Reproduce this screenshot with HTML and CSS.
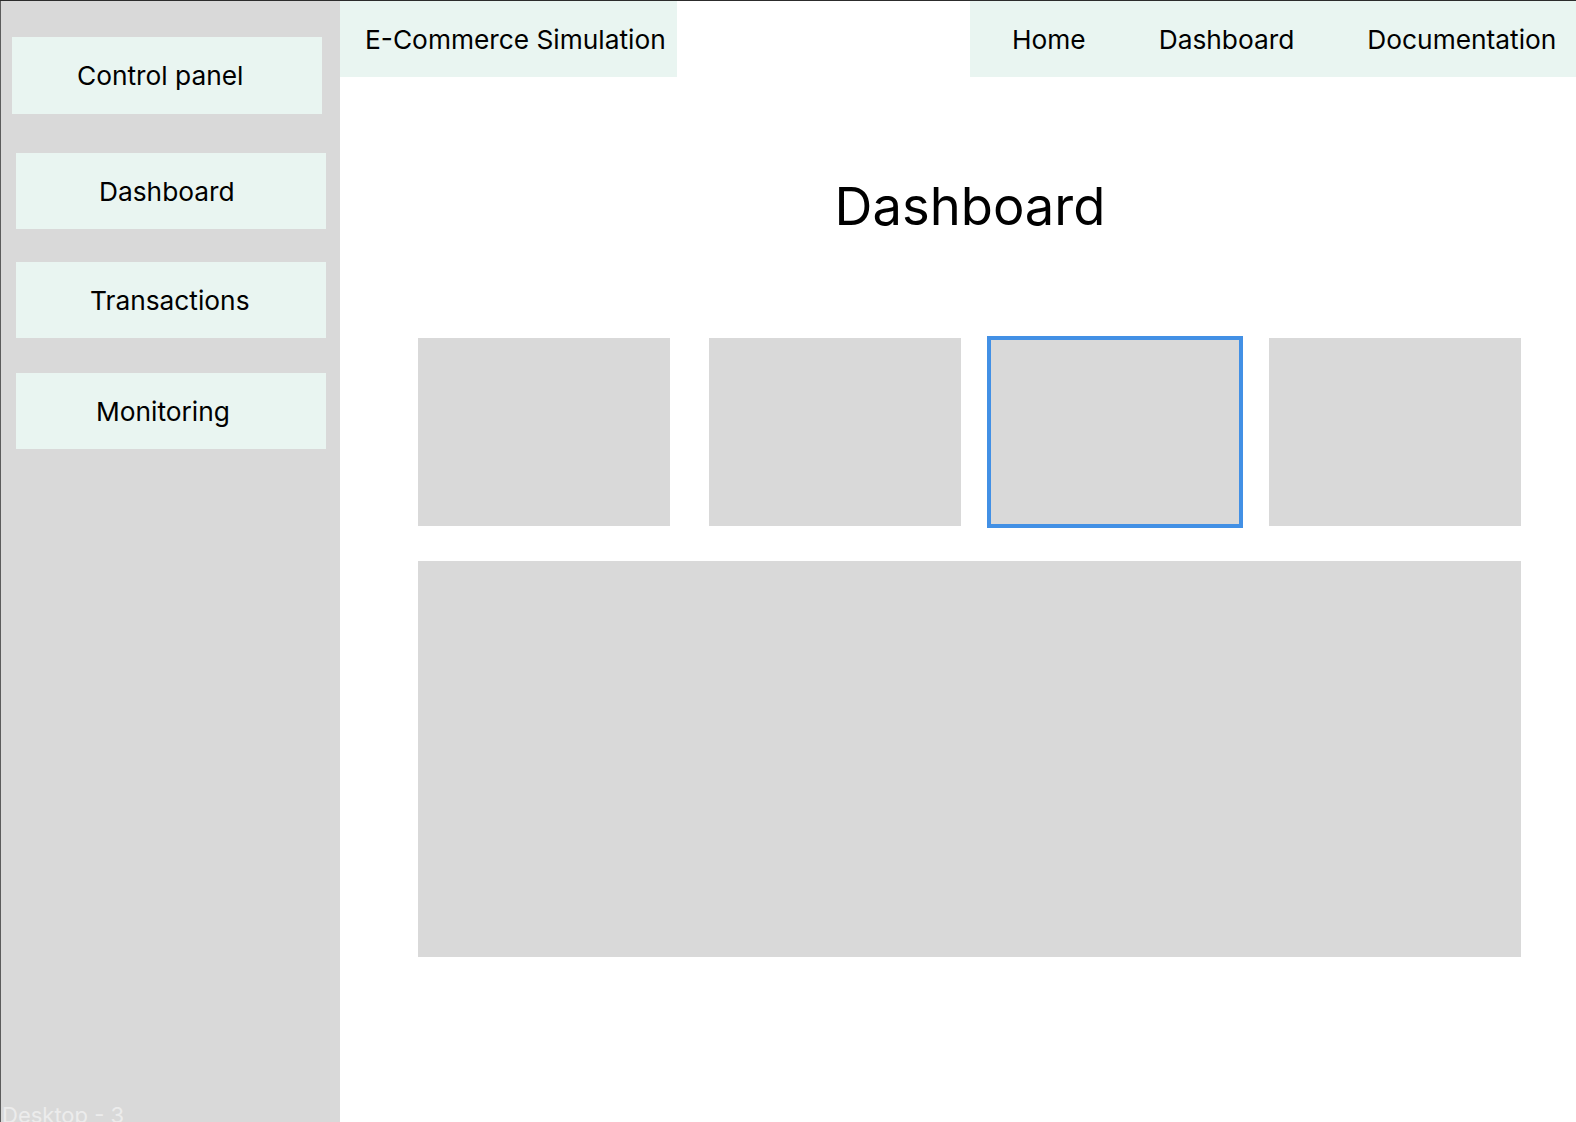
FILE: index.html
```html
<!DOCTYPE html>
<html lang="en">
<head>
<meta charset="utf-8">
<title>Dashboard</title>
<link rel="stylesheet" href="styles.css">
</head>
<body>
<div class="page">
  <aside class="sidebar">
    <div class="side-item side-control">Control panel</div>
    <div class="side-item side-dashboard">Dashboard</div>
    <div class="side-item side-transactions">Transactions</div>
    <div class="side-item side-monitoring">Monitoring</div>
  </aside>
  <main class="main">
    <header class="topbar">
      <div class="brand">E-Commerce Simulation</div>
      <nav class="nav">
        <span class="nav-link">Home</span>
        <span class="nav-link">Dashboard</span>
        <span class="nav-link">Documentation</span>
      </nav>
    </header>
    <section class="content">
      <h1 class="title">Dashboard</h1>
      <div class="cards">
        <div class="card card-first"></div>
        <div class="card"></div>
        <div class="card card-selected"></div>
        <div class="card"></div>
      </div>
      <div class="panel"></div>
    </section>
  </main>
  <div class="frame-label">Desktop - 3</div>
</div>
</body>
</html>
```
FILE: styles.css
```css
html, body {
  margin: 0;
  padding: 0;
  background: #ffffff;
  overflow: hidden;
}

body {
  font-family: "Inter", "Noto Sans", "Liberation Sans", sans-serif;
  color: #000000;
  width: 1576px;
  height: 1122px;
}

.page {
  position: relative;
  display: flex;
  width: 1600px;
  height: 1121px;
  border-top: 1px solid #2c2c2c;
}

.sidebar {
  width: 339px;
  flex: 0 0 339px;
  border-left: 1px solid #5c5c5c;
  background: #d9d9d9;
  padding-top: 36px;
  box-sizing: content-box;
  display: flex;
  flex-direction: column;
  align-items: flex-start;
}

.side-item {
  width: 310px;
  height: 76px;
  background: #e9f5f1;
  display: flex;
  align-items: center;
  font-size: 26.3px;
  box-sizing: border-box;
  white-space: nowrap;
}

.side-control {
  margin-left: 11px;
  padding-left: 65px;
  height: 77px;
}

.side-dashboard {
  margin-left: 15px;
  margin-top: 39px;
  padding-left: 83px;
}

.side-transactions {
  margin-left: 15px;
  margin-top: 33px;
  padding-left: 74px;
}

.side-monitoring {
  margin-left: 15px;
  margin-top: 35px;
  padding-left: 80px;
}

.main {
  width: 1260px;
  flex: 0 0 1260px;
  display: flex;
  flex-direction: column;
}

.topbar {
  display: flex;
  height: 76px;
}

.brand {
  width: 337px;
  height: 76px;
  background: #e9f5f1;
  font-size: 26.3px;
  display: flex;
  align-items: center;
  padding-left: 25px;
  box-sizing: border-box;
  white-space: nowrap;
}

.nav {
  margin-left: auto;
  width: 630px;
  height: 76px;
  background: #e9f5f1;
  display: flex;
  align-items: center;
  gap: 73px;
  padding-left: 42px;
  box-sizing: border-box;
  font-size: 26.3px;
  white-space: nowrap;
}

.content {
  padding: 0 78px;
  display: flex;
  flex-direction: column;
}

.title {
  margin: 98px 0 0 0;
  font-size: 52.5px;
  line-height: 63px;
  font-weight: 400;
  text-align: center;
}

.cards {
  display: flex;
  gap: 28px;
  margin-top: 100px;
}

.card {
  width: 252px;
  height: 188px;
  background: #d9d9d9;
  flex: 0 0 252px;
}

.card-first {
  margin-right: 11px;
}

.card-selected {
  outline: 4px solid #4290e5;
  outline-offset: -2px;
}

.panel {
  margin-top: 35px;
  width: 1103px;
  height: 396px;
  background: #d9d9d9;
}

.frame-label {
  position: absolute;
  left: 2px;
  top: 1101px;
  font-size: 22px;
  color: #ececec;
  white-space: nowrap;
}
```
